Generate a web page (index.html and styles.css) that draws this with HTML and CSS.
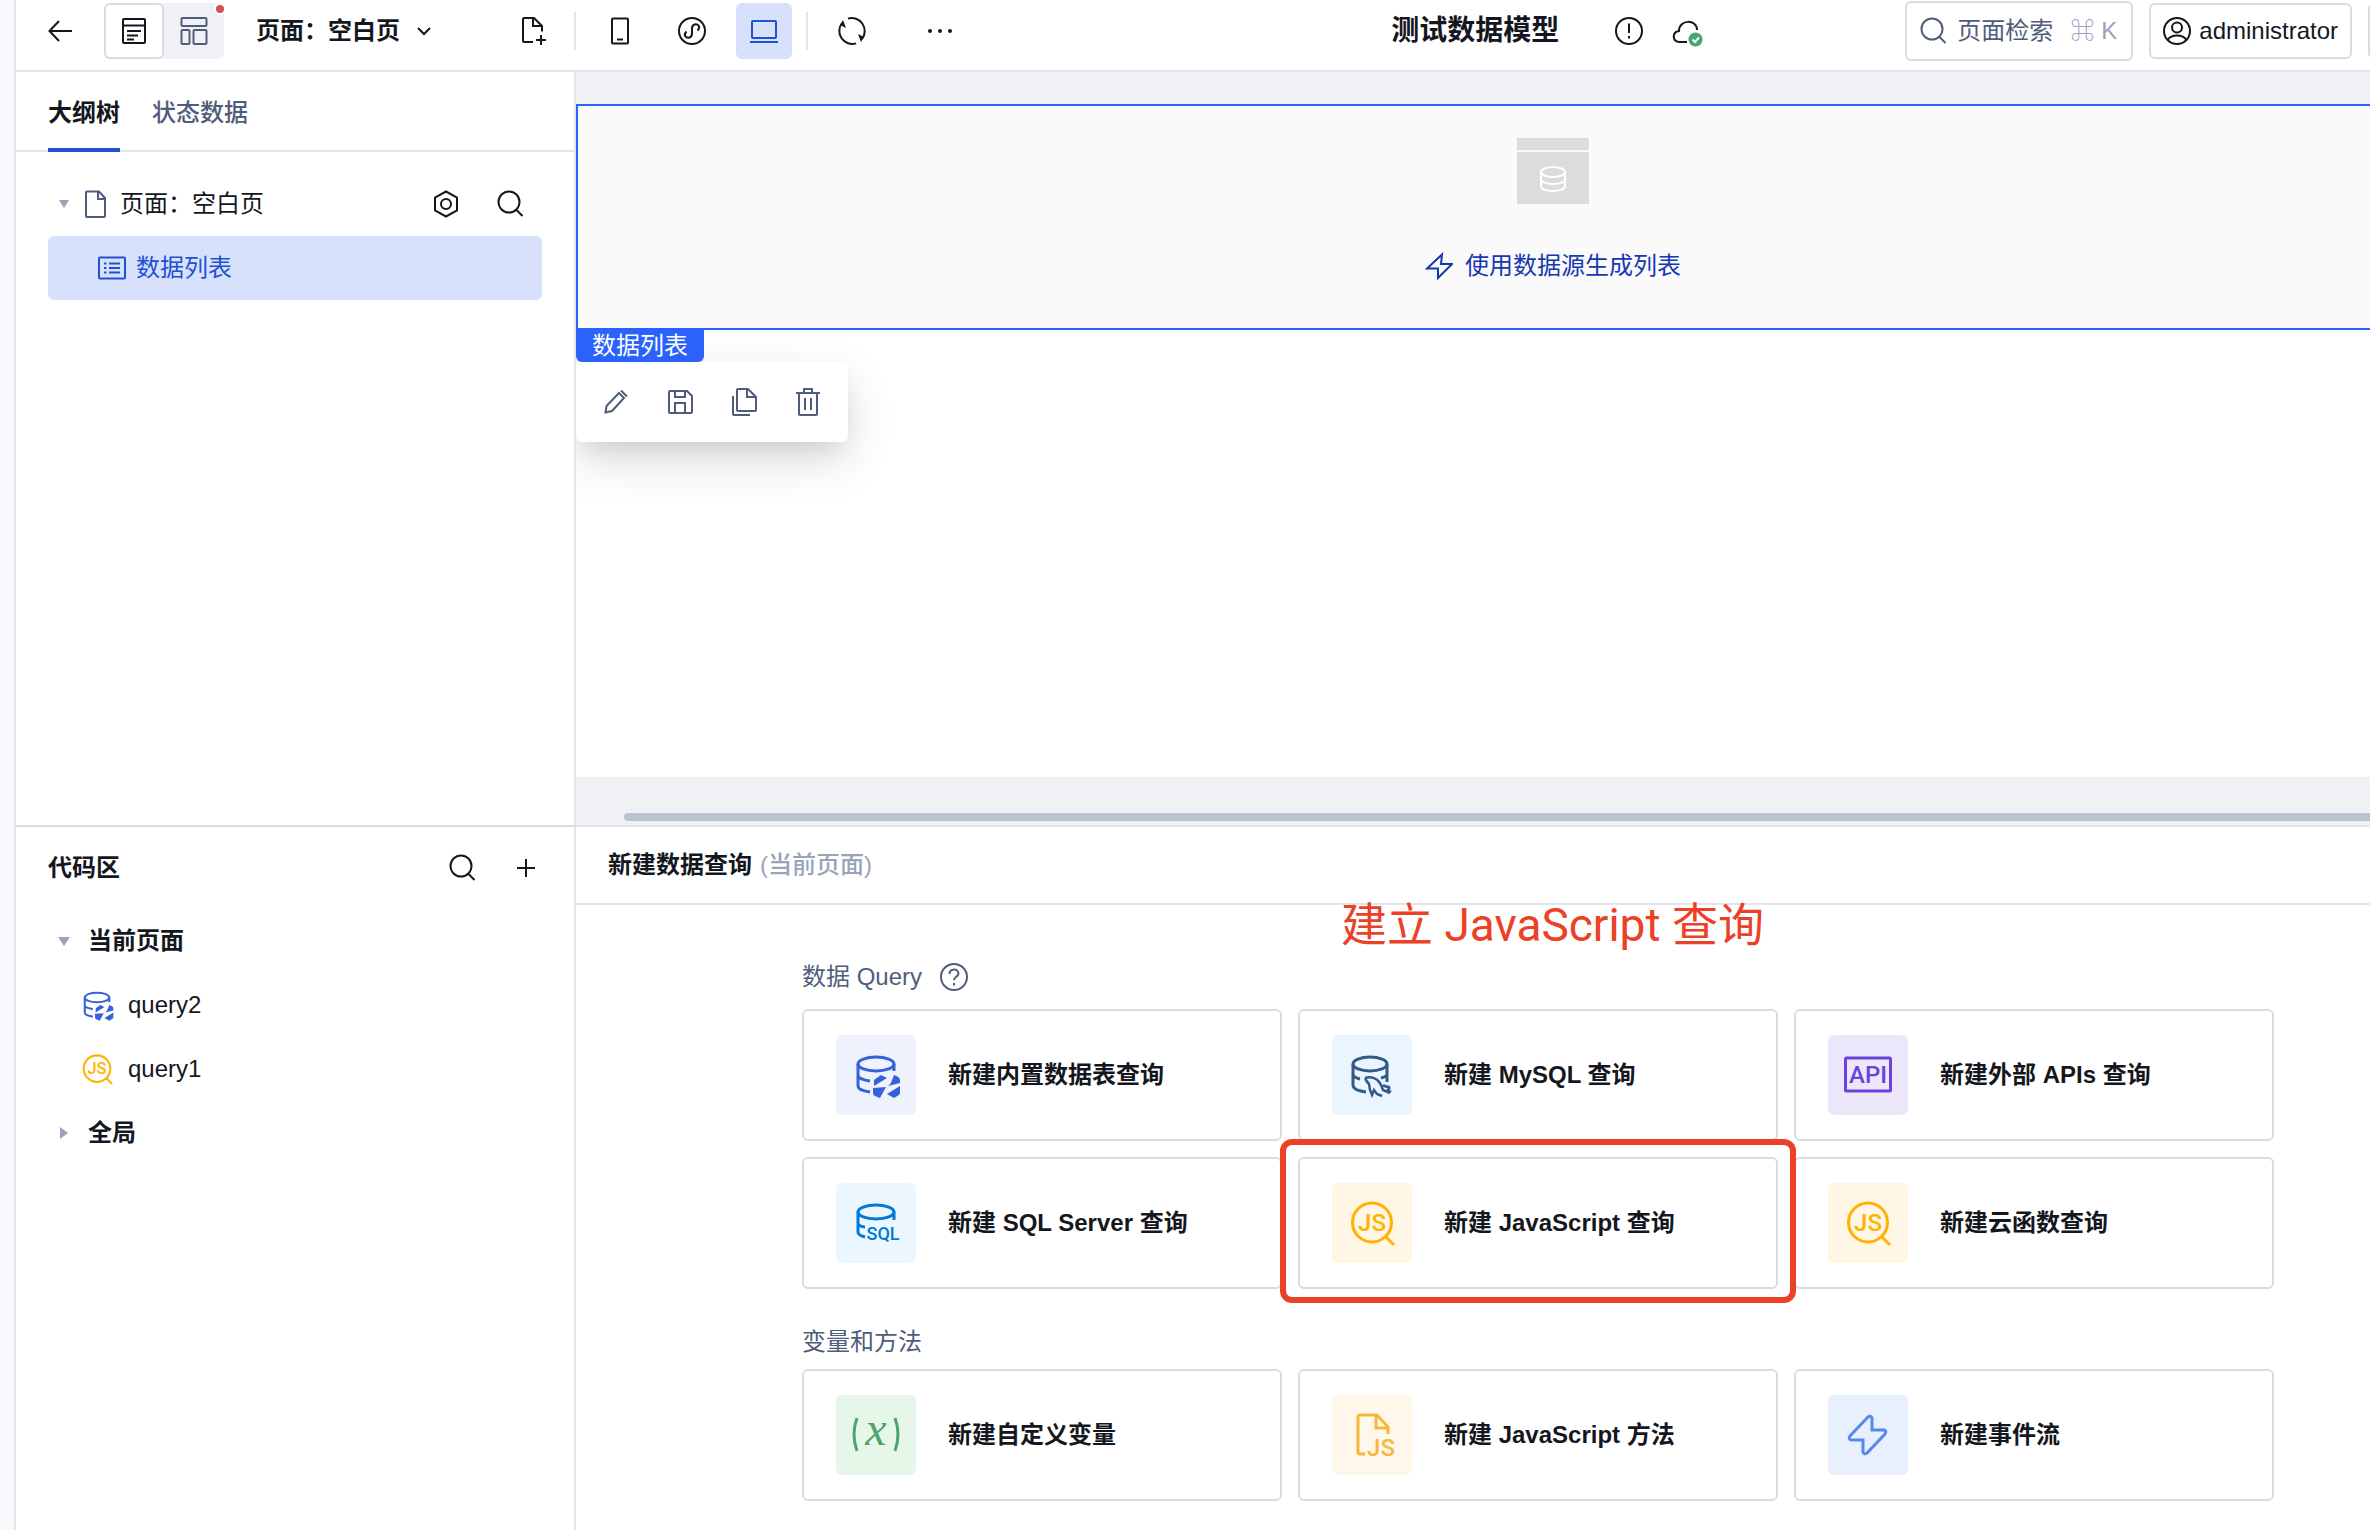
FILE: index.html
```html
<!DOCTYPE html>
<html lang="zh-CN">
<head>
<meta charset="utf-8">
<title>测试数据模型</title>
<link rel="stylesheet" href="styles.css">
</head>
<body>
<svg class="sprite" aria-hidden="true">
  <symbol id="i-search" viewBox="0 0 28 28"><circle cx="13" cy="12" r="10.5"/><path d="M20 19.500l6.500 6.500"/></symbol>
  <symbol id="i-file" viewBox="0 0 28 28"><path d="M5 1.500h12l6 6.500v18q0 1-1 1H5q-1 0-1-1V2.500q0-1 1-1zM16 2v7h7"/></symbol>
  <symbol id="i-bolt" viewBox="0 0 28 28"><path d="M17 2.500L2 16.500h11v9.500l14-14H16z"/></symbol>
  <symbol id="i-table-query" viewBox="-2 -2 44 44" overflow="visible"><ellipse cx="20" cy="9" rx="18" ry="7"/><path d="M2 9v22c0 3 5 5 12 6M38 9v7M2 20c0 3 5 5 12 6"/><path class="solid" d="M25 20l6 3-13 8v-5c0-2 3-3 7-6zM38 20c5 2 6 3 6 6v2l-12 3c3-2 4-6 6-11zM17 33l13-1-6 11-5-2c-2-1-2-2-2-8zM31 39l13-8v7c0 2-3 3-6 5z"/></symbol>
  <symbol id="i-js-query" viewBox="-2 -1 44 44" overflow="visible"><circle cx="20" cy="20.5" r="19.5"/><path d="M34 35l8 8"/><text x="20" y="29" text-anchor="middle" font-size="24">JS</text></symbol>
</svg>

<aside class="rail"></aside>
<div class="app">
  <header class="topbar">
    <button class="icon-btn slim" aria-label="返回"><svg class="ico ink" viewBox="0 0 24 28"><path d="M24 14H2M11 4L1.500 14 11 24"/></svg></button>
    <div class="mode">
      <button class="mode-btn active" aria-label="页面"><svg class="ico ink" viewBox="0 0 28 28"><rect x="3" y="2" width="22" height="24" rx="1"/><path d="M3 8.500h22M7 14h14M7 18.500h11M7 22.500h7"/></svg></button>
      <button class="mode-btn" aria-label="布局"><svg class="ico" viewBox="0 0 28 28"><rect x="1.500" y="1" width="25" height="8" rx="1"/><rect x="1.500" y="13" width="8" height="14" rx="1"/><rect x="13.500" y="13" width="13" height="14" rx="1"/></svg></button>
      <span class="dot"></span>
    </div>
    <button class="page-menu" aria-haspopup="menu">页面：空白页<svg class="ico ink chevron" viewBox="0 0 16 16"><path d="M2 5l6 6 6-6"/></svg></button>
    <div class="tools">
      <button class="icon-btn" aria-label="新建页面"><svg class="ico ink" viewBox="-2 0 28 28"><path d="M13 25H4q-1 0-1-1V2q0-1 1-1h10l8 8v5.500M13 1v8h9M21 18v10M16 23h10"/></svg></button>
      <span class="sep"></span>
      <button class="icon-btn" aria-label="手机"><svg class="ico ink" viewBox="0 0 28 28"><rect x="6" y="1.500" width="16" height="25" rx="1"/><path d="M11 22.500h6"/></svg></button>
      <button class="icon-btn" aria-label="小程序"><svg class="ico ink" viewBox="0 0 28 28"><circle cx="14" cy="14" r="13"/><path d="M8.500 14.500c-4 4 0 7 3 6 2-.7 2.500-2 2.500-4v-5c0-2 .5-3.300 2.500-4 3-1 7 2 3 6"/></svg></button>
      <button class="icon-btn on" aria-label="桌面"><svg class="ico" viewBox="0 0 28 28"><rect x="2" y="4" width="24" height="17" rx="1"/><path d="M0 25h28"/></svg></button>
      <span class="sep"></span>
      <button class="icon-btn" aria-label="刷新"><svg class="ico ink" viewBox="0 0 28 28"><path d="M10 1.600A13 13 0 0 1 24 22M18 26.400A13 13 0 0 1 4 6"/><path class="solid" d="M5 3l3 8-6-3zM23 25l-3-8 6 3z"/></svg></button>
    </div>
    <button class="icon-btn more" aria-label="更多"><svg class="ico ink" viewBox="0 0 28 28"><g class="solid"><circle cx="4" cy="14" r="2"/><circle cx="14" cy="14" r="2"/><circle cx="24" cy="14" r="2"/></g></svg></button>

    <div class="project">
      <h1>测试数据模型</h1>
      <button class="icon-btn slim info" aria-label="提示"><svg class="ico ink" viewBox="0 0 28 28"><circle cx="14" cy="14" r="13"/><path d="M14 6.500v9.500M14 19v2.500"/></svg></button>
      <button class="icon-btn cloud" aria-label="已保存"><svg class="ico ink" viewBox="0 0 32 28"><path d="M16 23H8c-7-1-7-10 0-11 0-12 18-12 18-1"/><circle cx="24.500" cy="20.500" r="7" fill="#46a573" stroke="none"/><path d="M21.500 20.500l2.500 2.500 4-4.500" stroke="#fff"/></svg></button>
    </div>

    <div class="account">
      <label class="search"><svg class="ico"><use href="#i-search"/></svg><input type="text" placeholder="页面检索" aria-label="页面检索"><kbd>⌘ K</kbd></label>
      <button class="box user"><svg class="ico ink" viewBox="0 0 28 28"><circle cx="14" cy="14" r="13"/><circle cx="14" cy="10.500" r="5"/><path d="M4.500 23c4-6 15-6 19 0"/></svg>administrator</button>
      <button class="box extra" aria-label="预览"></button>
    </div>
  </header>

  <main class="work">
    <section class="outline">
      <div class="tabs" role="tablist">
        <button class="tab current" role="tab" aria-selected="true">大纲树</button>
        <button class="tab" role="tab" aria-selected="false">状态数据</button>
      </div>
      <div class="tree">
        <div class="tree-row">
          <svg class="arrow" viewBox="0 0 12 12"><path d="M1 2h10L6 10z"/></svg>
          <svg class="ico"><use href="#i-file"/></svg>
          <span class="tree-name">页面：空白页</span>
          <button class="icon-btn slim" aria-label="设置"><svg class="ico ink" viewBox="0 0 28 28"><path d="M14 1.500l11 6v13l-11 6-11-6v-13z"/><circle cx="14" cy="14" r="5"/></svg></button>
          <button class="icon-btn slim" aria-label="搜索"><svg class="ico ink"><use href="#i-search"/></svg></button>
        </div>
        <button class="tree-row selected"><svg class="ico" viewBox="0 0 28 28"><rect x="1" y="3.500" width="26" height="21" rx="1"/><path d="M6 9.500h2.500M6 14h2.500M6 18.500h2.500M11 9.500h11M11 14h11M11 18.500h11"/></svg>数据列表</button>
      </div>
    </section>

    <section class="canvas">
      <div class="frame">
        <div class="list-block">
          <svg class="placeholder" viewBox="0 0 72 66"><path fill="#dcdcdc" d="M0 0h72v12H0zM0 14h72v52H0z"/><g fill="none" stroke="#fff" stroke-width="2"><ellipse cx="36" cy="34" rx="12" ry="5"/><path d="M24 34v14c0 3 5 5 12 5s12-2 12-5V34M24 41c0 3 5 5 12 5s12-2 12-5"/></g></svg>
          <a class="generate" href="#"><svg class="ico"><use href="#i-bolt"/></svg>使用数据源生成列表</a>
          <div class="block-menu">
            <span class="block-tag">数据列表</span>
            <div class="block-tools">
              <button class="icon-btn slim" aria-label="编辑"><svg class="ico" viewBox="0 0 28 28"><path d="M3.500 24.500l1-6.500L17 5l5 5L10 23zM19 2.500l6 6"/></svg></button>
              <button class="icon-btn slim" aria-label="保存"><svg class="ico" viewBox="0 0 28 28"><path d="M4 3h17l5 5v16q0 1-1 1H4q-1 0-1-1V4q0-1 1-1zM9 3v6h10V3M9 25V15h10v10"/></svg></button>
              <button class="icon-btn slim" aria-label="复制"><svg class="ico" viewBox="0 0 28 28"><path d="M8 1h10l8 8v13q0 1-1 1H8q-1 0-1-1V2q0-1 1-1zM17 1v8h9M3 8v18q0 1 1 1h16"/></svg></button>
              <button class="icon-btn slim" aria-label="删除"><svg class="ico" viewBox="0 0 28 28"><path d="M2 5h24M10 5V1h8v4M5 5v21q0 1 1 1h16q1 0 1-1V5M11 10v12M17 10v12"/></svg></button>
            </div>
          </div>
        </div>
      </div>
      <div class="scrollbar"></div>
    </section>

    <section class="code">
      <div class="code-head">
        <h2>代码区</h2>
        <button class="icon-btn slim" aria-label="搜索"><svg class="ico ink"><use href="#i-search"/></svg></button>
        <button class="icon-btn slim" aria-label="新增"><svg class="ico ink" viewBox="0 0 28 28"><path d="M14 5v18M5 14h18"/></svg></button>
      </div>
      <ul class="code-tree">
        <li class="group"><svg class="arrow" viewBox="0 0 12 12"><path d="M0 2h12L6 11z"/></svg>当前页面</li>
        <li class="query blue"><svg class="ico-q"><use href="#i-table-query"/></svg>query2</li>
        <li class="query amber"><svg class="ico-q"><use href="#i-js-query"/></svg>query1</li>
        <li class="group"><svg class="arrow" viewBox="0 0 12 12"><path d="M2 0v12l8-6z"/></svg>全局</li>
      </ul>
    </section>

    <section class="queries">
      <div class="queries-head"><h2>新建数据查询</h2><span>(当前页面)</span></div>
      <p class="note">建立 JavaScript 查询</p>
      <div class="queries-body">
        <h3 class="label tall">数据 Query<svg class="ico" viewBox="0 0 28 28"><circle cx="14" cy="14" r="13"/><path d="M9.500 11c0-6 9-6 9-.5 0 3-4.500 3.500-4.500 6.500M14 20v2.500"/></svg></h3>
        <div class="cards">
          <button class="card"><span class="tile blue"><svg><use href="#i-table-query"/></svg></span>新建内置数据表查询</button>
          <button class="card"><span class="tile navy"><svg viewBox="-1 -2 44 44"><ellipse cx="19" cy="9" rx="17" ry="7"/><path d="M2 9v21c0 4 5 6 13 7M36 9v18M2 19c0 2 3 4 7 5M36 19c0 2-2 3-6 4"/><path d="M14 23c7-2 13 1 16 7l2 5 7 3M14 23c1 3 2 4 4 6l1 6 2 5 2-5 3 4 5 2M39 32c-3 0-5 0-7-2M39 32l-2 3 3 2" stroke-width="2.500"/></svg></span>新建 MySQL 查询</button>
          <button class="card"><span class="tile violet"><svg viewBox="0 0 48 44"><rect x="1.500" y="5" width="45" height="33" rx="1"/><text x="24" y="30" text-anchor="middle" font-size="24">API</text></svg></span>新建外部 APIs 查询</button>
          <button class="card"><span class="tile azure"><svg viewBox="-2 -2 44 44"><ellipse cx="20" cy="9" rx="18" ry="7"/><path d="M2 9v20c0 3 3 4 7 5M38 9v8M2 20c0 2 3 4 7 4"/><text x="27" y="37" text-anchor="middle" font-size="18" font-weight="bold">SQL</text></svg></span>新建 SQL Server 查询</button>
          <button class="card marked"><span class="tile amber"><svg><use href="#i-js-query"/></svg></span>新建 JavaScript 查询</button>
          <button class="card"><span class="tile amber"><svg><use href="#i-js-query"/></svg></span>新建云函数查询</button>
        </div>
        <h3 class="label">变量和方法</h3>
        <div class="cards">
          <button class="card"><span class="tile green"><svg viewBox="0 0 48 44"><path d="M5 5q-6 16 0 33M43 5q6 16 0 33"/><text class="var" x="24" y="32" text-anchor="middle" font-size="48">x</text></svg></span>新建自定义变量</button>
          <button class="card"><span class="tile gold"><svg viewBox="-2 0 44 44"><path d="M13 41H8q-2 0-2-2V4q0-2 2-2h17l11 12v7M24 2v13h12"/><text x="29" y="43" text-anchor="middle" font-size="24">JS</text></svg></span>新建 JavaScript 方法</button>
          <button class="card"><span class="tile sky"><svg viewBox="0 0 44 44"><path d="M22 4L4 23q-2 3 1 4h12v12q1 3 4 1l18-19q2-3-1-4H26V5q-1-3-4-1z"/></svg></span>新建事件流</button>
        </div>
      </div>
    </section>
  </main>
</div>
</body>
</html>
```
FILE: styles.css
```css
* { box-sizing: border-box; }

:root {
  --ink: #15171e;
  --slate: #4f5d7a;
  --muted: #99a3ba;
  --line: #e4e5ea;
  --edge: #d7dbe2;
  --blue: #2250d4;
  --tint: #d7e1fb;
  --mark: #eb4126;
}

body {
  margin: 0;
  min-height: 100vh;
  display: flex;
  overflow: hidden;
  background: #fff;
  color: var(--ink);
  font: 24px/32px "Liberation Sans", "Noto Sans CJK SC", sans-serif;
}

h1, h2, h3, p, ul { margin: 0; padding: 0; list-style: none; }
h1 { font-size: 28px; line-height: 40px; font-weight: bold; }
h2 { font-size: 24px; line-height: 32px; font-weight: bold; }

button, input, kbd { font: inherit; color: inherit; }
button { padding: 0; border: 0; background: none; }

svg { flex: none; overflow: visible; fill: none; stroke: currentColor; stroke-width: 2; }
svg text { fill: currentColor; stroke: none; font-family: Roboto, sans-serif; font-weight: 500; }
.solid { fill: currentColor; stroke: none; }
.sprite { position: absolute; width: 0; height: 0; }
.ico { width: 28px; height: 28px; color: var(--slate); }
.ico.ink { color: var(--ink); }
.arrow { width: 12px; height: 12px; fill: var(--muted); stroke: none; }

.rail { flex: none; width: 16px; background: #f9f9fb; border-right: 2px solid var(--line); }
.app { flex: 1; min-width: 0; display: flex; flex-direction: column; }

/* Top bar */
.topbar {
  display: flex;
  align-items: center;
  height: 72px;
  padding: 0 0 8px 32px;
  border-bottom: 2px solid var(--line);
  overflow: hidden;
}
.icon-btn {
  display: flex;
  align-items: center;
  justify-content: center;
  width: 56px;
  height: 56px;
  border-radius: 6px;
}
.icon-btn.slim { width: 28px; height: 28px; }
.topbar > .slim, .topbar > .slim svg { width: 24px; }
.icon-btn.on { background: var(--tint); }
.icon-btn.on .ico { color: var(--blue); }
.mode { position: relative; display: flex; margin: 0 32px; border-radius: 6px; background: #f0f1f5; }
.mode-btn { display: flex; align-items: center; justify-content: center; width: 60px; height: 56px; border-radius: 6px; }
.mode-btn.active { background: #fff; border: 2px solid var(--edge); }
.dot {
  position: absolute;
  top: 0;
  right: -2px;
  width: 12px;
  height: 12px;
  border: 2px solid #fff;
  border-radius: 50%;
  background: #d65252;
}
.page-menu { display: flex; align-items: center; gap: 16px; font-weight: bold; }
.chevron { width: 16px; height: 16px; }
.tools { display: flex; align-items: center; gap: 16px; margin-left: 72px; }
.sep { width: 2px; height: 38px; background: var(--line); margin-left: -2px; }
.more { margin-left: 32px; }
.project { display: flex; align-items: center; gap: 28px; margin: 0 202px 0 auto; }
.info { margin-left: 28px; }
.cloud { width: 32px; }
.cloud .ico { width: 32px; margin-top: 4px; }
.account { display: flex; align-items: center; gap: 16px; margin-right: -54px; }
.search, .box {
  display: flex;
  align-items: center;
  border: 2px solid var(--edge);
  border-radius: 6px;
}
.search { width: 228px; height: 60px; padding: 0 14px 0 12px; gap: 10px; }
.search input { flex: 1; min-width: 0; padding: 0; border: 0; outline: 0; background: none; }
.search input::placeholder { color: var(--slate); opacity: 1; }
.search kbd { color: var(--muted); white-space: nowrap; }
.box { height: 56px; }
.user { gap: 8px; padding: 0 12px; }
.extra { width: 56px; }

/* Workspace */
.work { flex: 1; display: grid; grid-template-columns: 560px minmax(0, 1fr); grid-template-rows: auto 1fr; }
.outline, .code { border-right: 2px solid var(--line); }

.tabs { display: flex; gap: 32px; height: 80px; padding: 0 32px; border-bottom: 2px solid var(--line); }
.tab { height: 80px; border-bottom: 4px solid transparent; padding-top: 6px; font-weight: 500; color: var(--slate); }
.tab.current { border-color: var(--blue); color: var(--ink); font-weight: bold; }
.tree { padding: 20px 32px; }
.tree-row { display: flex; align-items: center; width: 100%; height: 64px; padding: 0 18px 0 10px; }
.tree-row .arrow { margin-right: 12px; }
.tree-name { flex: 1; padding-left: 10px; }
.tree-row .icon-btn { margin-left: 36px; }
.tree-row.selected { gap: 10px; padding-left: 50px; border-radius: 6px; background: var(--tint); color: var(--blue); }
.tree-row.selected .ico { color: var(--blue); }

/* Canvas */
.canvas { padding-top: 32px; background: #f0f1f5; overflow: hidden; }
.frame { min-height: 673px; background: #fff; }
.list-block {
  position: relative;
  display: flex;
  flex-direction: column;
  align-items: center;
  gap: 46px;
  width: calc(100% + 160px);
  padding: 32px 0 46px;
  border: 2px solid #2a62fb;
  background: #fafafa;
}
.placeholder { width: 72px; height: 66px; stroke: none; }
.generate { display: flex; align-items: center; gap: 12px; color: #1637b0; text-decoration: none; }
.generate .ico { color: inherit; }
.block-menu { position: absolute; top: calc(100% + 2px); left: -2px; }
.block-tag {
  display: inline-block;
  padding: 0 16px;
  border-radius: 0 0 6px 6px;
  background: #2a62fb;
  color: #fff;
  vertical-align: top;
}
.block-tools {
  display: flex;
  gap: 36px;
  padding: 26px;
  border-radius: 0 6px 6px 6px;
  background: #fff;
  box-shadow: 0 18px 48px rgba(0, 0, 0, .14), 0 12px 24px -8px rgba(0, 0, 0, .1);
}
.scrollbar { height: 8px; margin: 36px 0 4px 48px; border-radius: 4px 0 0 4px; background: #bcc2d0; }

/* Code area */
.code { border-top: 2px solid var(--edge); }
.code-head { display: flex; align-items: center; gap: 36px; height: 82px; padding: 0 34px 0 32px; }
.code-head h2 { flex: 1; }
.code-tree li { display: flex; align-items: center; height: 64px; }
.group { padding-left: 42px; gap: 18px; font-weight: bold; }
.query { padding-left: 66px; gap: 16px; }
.query svg { stroke-width: 3; }
.ico-q { width: 30px; height: 30px; }
.code-tree .blue svg { color: #3661d8; }
.code-tree .amber svg { color: #ffb300; }

/* New query */
.queries { position: relative; border-top: 2px solid var(--line); }
.queries-head { display: flex; align-items: center; gap: 8px; height: 78px; padding: 0 32px; border-bottom: 2px solid var(--line); font-weight: 500; }
.queries-head span { color: var(--muted); }
.note {
  position: absolute;
  top: 70px;
  left: 765px;
  color: var(--mark);
  font: 46px/56px Roboto, "Noto Sans CJK SC", sans-serif;
  white-space: nowrap;
}
.queries-body { padding: 52px 96px 28px 226px; }
.label { display: flex; align-items: center; gap: 18px; margin: 38px 0 12px; font-size: 24px; line-height: 30px; font-weight: 400; color: var(--slate); }
.label.tall { margin-top: 0; line-height: 40px; }
.cards { display: grid; grid-template-columns: repeat(3, minmax(0, 1fr)); gap: 16px; }
.card {
  position: relative;
  display: flex;
  align-items: center;
  gap: 32px;
  height: 132px;
  padding: 0 32px;
  border: 2px solid var(--edge);
  border-radius: 6px;
  background: #fff;
  font-weight: bold;
  white-space: nowrap;
}
.marked::after {
  content: "";
  position: absolute;
  z-index: 1;
  inset: -20px -20px -16px;
  border: 6px solid var(--mark);
  border-radius: 12px;
}
.tile { display: flex; align-items: center; justify-content: center; width: 80px; height: 80px; border-radius: 6px; }
.tile svg { width: 44px; height: 44px; stroke-width: 3; }
.tile.blue { background: #edf2fd; color: #3661d8; }
.tile.navy { background: #eaf5ff; color: #315b86; }
.tile.violet { background: #ede7fc; color: #6b42dc; }
.tile.azure { background: #ecf6ff; color: #0078d7; }
.tile.amber { background: #fff6e5; color: #ffb300; }
.tile.green { background: #e6f7e9; color: #4ea373; }
.tile.gold { background: #fff8ea; color: #f5b83d; }
.tile.sky { background: #e8f0fe; color: #5589f0; }
.tile.violet svg, .tile.green svg { width: 48px; }
.tile .var { font-family: "Liberation Serif", serif; font-style: italic; font-weight: 400; }
```
